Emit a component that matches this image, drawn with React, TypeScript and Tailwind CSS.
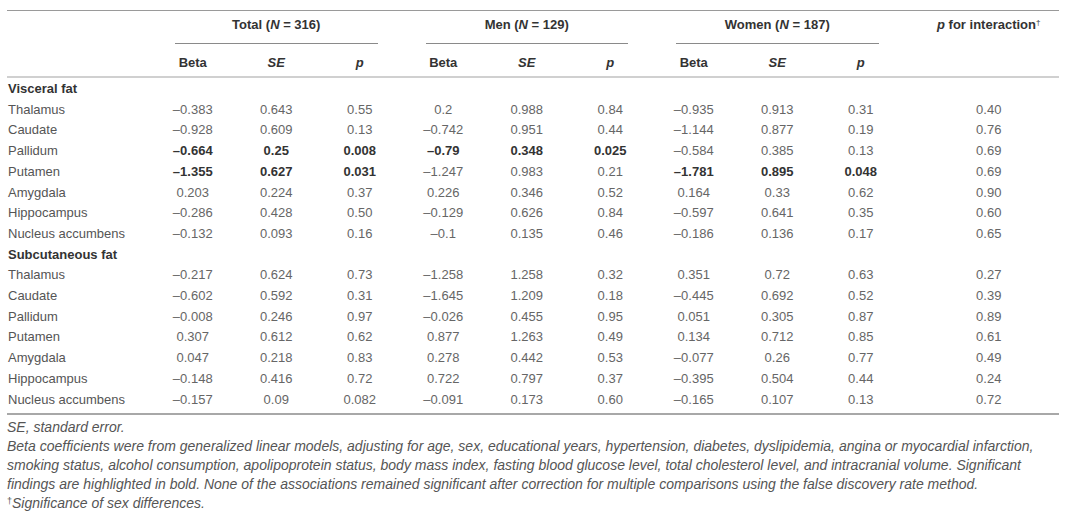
const groups = [
  { label: "Total", n: "316" },
  { label: "Men", n: "129" },
  { label: "Women", n: "187" },
];

// a leading "*" marks a value printed in bold
const sections = [
  {
    title: "Visceral fat",
    rows: [
      ["Thalamus", "–0.383", "0.643", "0.55", "0.2", "0.988", "0.84", "–0.935", "0.913", "0.31", "0.40"],
      ["Caudate", "–0.928", "0.609", "0.13", "–0.742", "0.951", "0.44", "–1.144", "0.877", "0.19", "0.76"],
      ["Pallidum", "*–0.664", "*0.25", "*0.008", "*–0.79", "*0.348", "*0.025", "–0.584", "0.385", "0.13", "0.69"],
      ["Putamen", "*–1.355", "*0.627", "*0.031", "–1.247", "0.983", "0.21", "*–1.781", "*0.895", "*0.048", "0.69"],
      ["Amygdala", "0.203", "0.224", "0.37", "0.226", "0.346", "0.52", "0.164", "0.33", "0.62", "0.90"],
      ["Hippocampus", "–0.286", "0.428", "0.50", "–0.129", "0.626", "0.84", "–0.597", "0.641", "0.35", "0.60"],
      ["Nucleus accumbens", "–0.132", "0.093", "0.16", "–0.1", "0.135", "0.46", "–0.186", "0.136", "0.17", "0.65"],
    ],
  },
  {
    title: "Subcutaneous fat",
    rows: [
      ["Thalamus", "–0.217", "0.624", "0.73", "–1.258", "1.258", "0.32", "0.351", "0.72", "0.63", "0.27"],
      ["Caudate", "–0.602", "0.592", "0.31", "–1.645", "1.209", "0.18", "–0.445", "0.692", "0.52", "0.39"],
      ["Pallidum", "–0.008", "0.246", "0.97", "–0.026", "0.455", "0.95", "0.051", "0.305", "0.87", "0.89"],
      ["Putamen", "0.307", "0.612", "0.62", "0.877", "1.263", "0.49", "0.134", "0.712", "0.85", "0.61"],
      ["Amygdala", "0.047", "0.218", "0.83", "0.278", "0.442", "0.53", "–0.077", "0.26", "0.77", "0.49"],
      ["Hippocampus", "–0.148", "0.416", "0.72", "0.722", "0.797", "0.37", "–0.395", "0.504", "0.44", "0.24"],
      ["Nucleus accumbens", "–0.157", "0.09", "0.082", "–0.091", "0.173", "0.60", "–0.165", "0.107", "0.13", "0.72"],
    ],
  },
];

const grid = "grid grid-cols-[144px_repeat(9,83.5px)_156.5px]";

function Cell({ v, last }: { v: string; last?: boolean }) {
  const bold = v.startsWith("*");
  return (
    <div
      className={`text-center ${last ? "pl-[16px]" : ""} ${
        bold ? "font-bold text-[#333]" : "text-[#666]"
      }`}
    >
      {bold ? v.slice(1) : v}
    </div>
  );
}

export default function App() {
  return (
    <div className="min-h-[515px] bg-white pl-[7px] pt-[10px] font-['Liberation_Sans',Arial,sans-serif] text-[13px]">
      <div className="w-[1052px]">
        <div className="border-t border-[#9a9a9a]" />

        {/* group headings */}
        <div className={`${grid} font-bold text-[#333]`}>
          <div />
          {groups.map((g) => (
            <div key={g.label} className="col-span-3 px-[24px] pt-[4px]">
              <div className="border-b border-[#8a8a8a] pb-[8px] text-center leading-[20px]">
                {g.label} (<i>N</i> = {g.n})
              </div>
            </div>
          ))}
          <div className="pl-[16px] pt-[4px] text-center leading-[20px]">
            <i>p</i> for interaction<sup className="text-[8px] font-normal">†</sup>
          </div>
        </div>

        {/* column headings */}
        <div className={`${grid} border-b-2 border-[#d0d0d0] pb-[3px] pt-[9px] font-bold leading-[20px] text-[#333]`}>
          <div />
          {groups.map((g) => (
            <div key={g.label} className="col-span-3 grid grid-cols-3 text-center">
              <div>Beta</div>
              <div>
                <i>SE</i>
              </div>
              <div>
                <i>p</i>
              </div>
            </div>
          ))}
          <div />
        </div>

        {/* body */}
        <div className="pt-[1px] pb-[3px] leading-[20.7px]">
          {sections.map((s) => (
            <div key={s.title}>
              <div className="pl-px font-bold text-[#333]">{s.title}</div>
              {s.rows.map((r, i) => (
                <div key={s.title + i} className={grid}>
                  <div className="pl-px text-[#555]">{r[0]}</div>
                  {r.slice(1).map((v, j) => (
                    <Cell key={j} v={v} last={j === 9} />
                  ))}
                </div>
              ))}
            </div>
          ))}
        </div>
        <div className="border-t-2 border-[#a8a8a8]" />

        {/* notes */}
        <div className="pt-[3px] text-[14px] leading-[19px] italic text-[#555]">
          <p>SE, standard error.</p>
          <p>
            Beta coefficients were from generalized linear models, adjusting for age, sex, educational years,
            hypertension, diabetes, dyslipidemia, angina or myocardial infarction,
            <br />
            smoking status, alcohol consumption, apolipoprotein status, body mass index, fasting blood glucose
            level, total cholesterol level, and intracranial volume. Significant
            <br />
            findings are highlighted in bold. None of the associations remained significant after correction for
            multiple comparisons using the false discovery rate method.
          </p>
          <p>
            <sup className="text-[9px] not-italic">†</sup>Significance of sex differences.
          </p>
        </div>
      </div>
    </div>
  );
}
